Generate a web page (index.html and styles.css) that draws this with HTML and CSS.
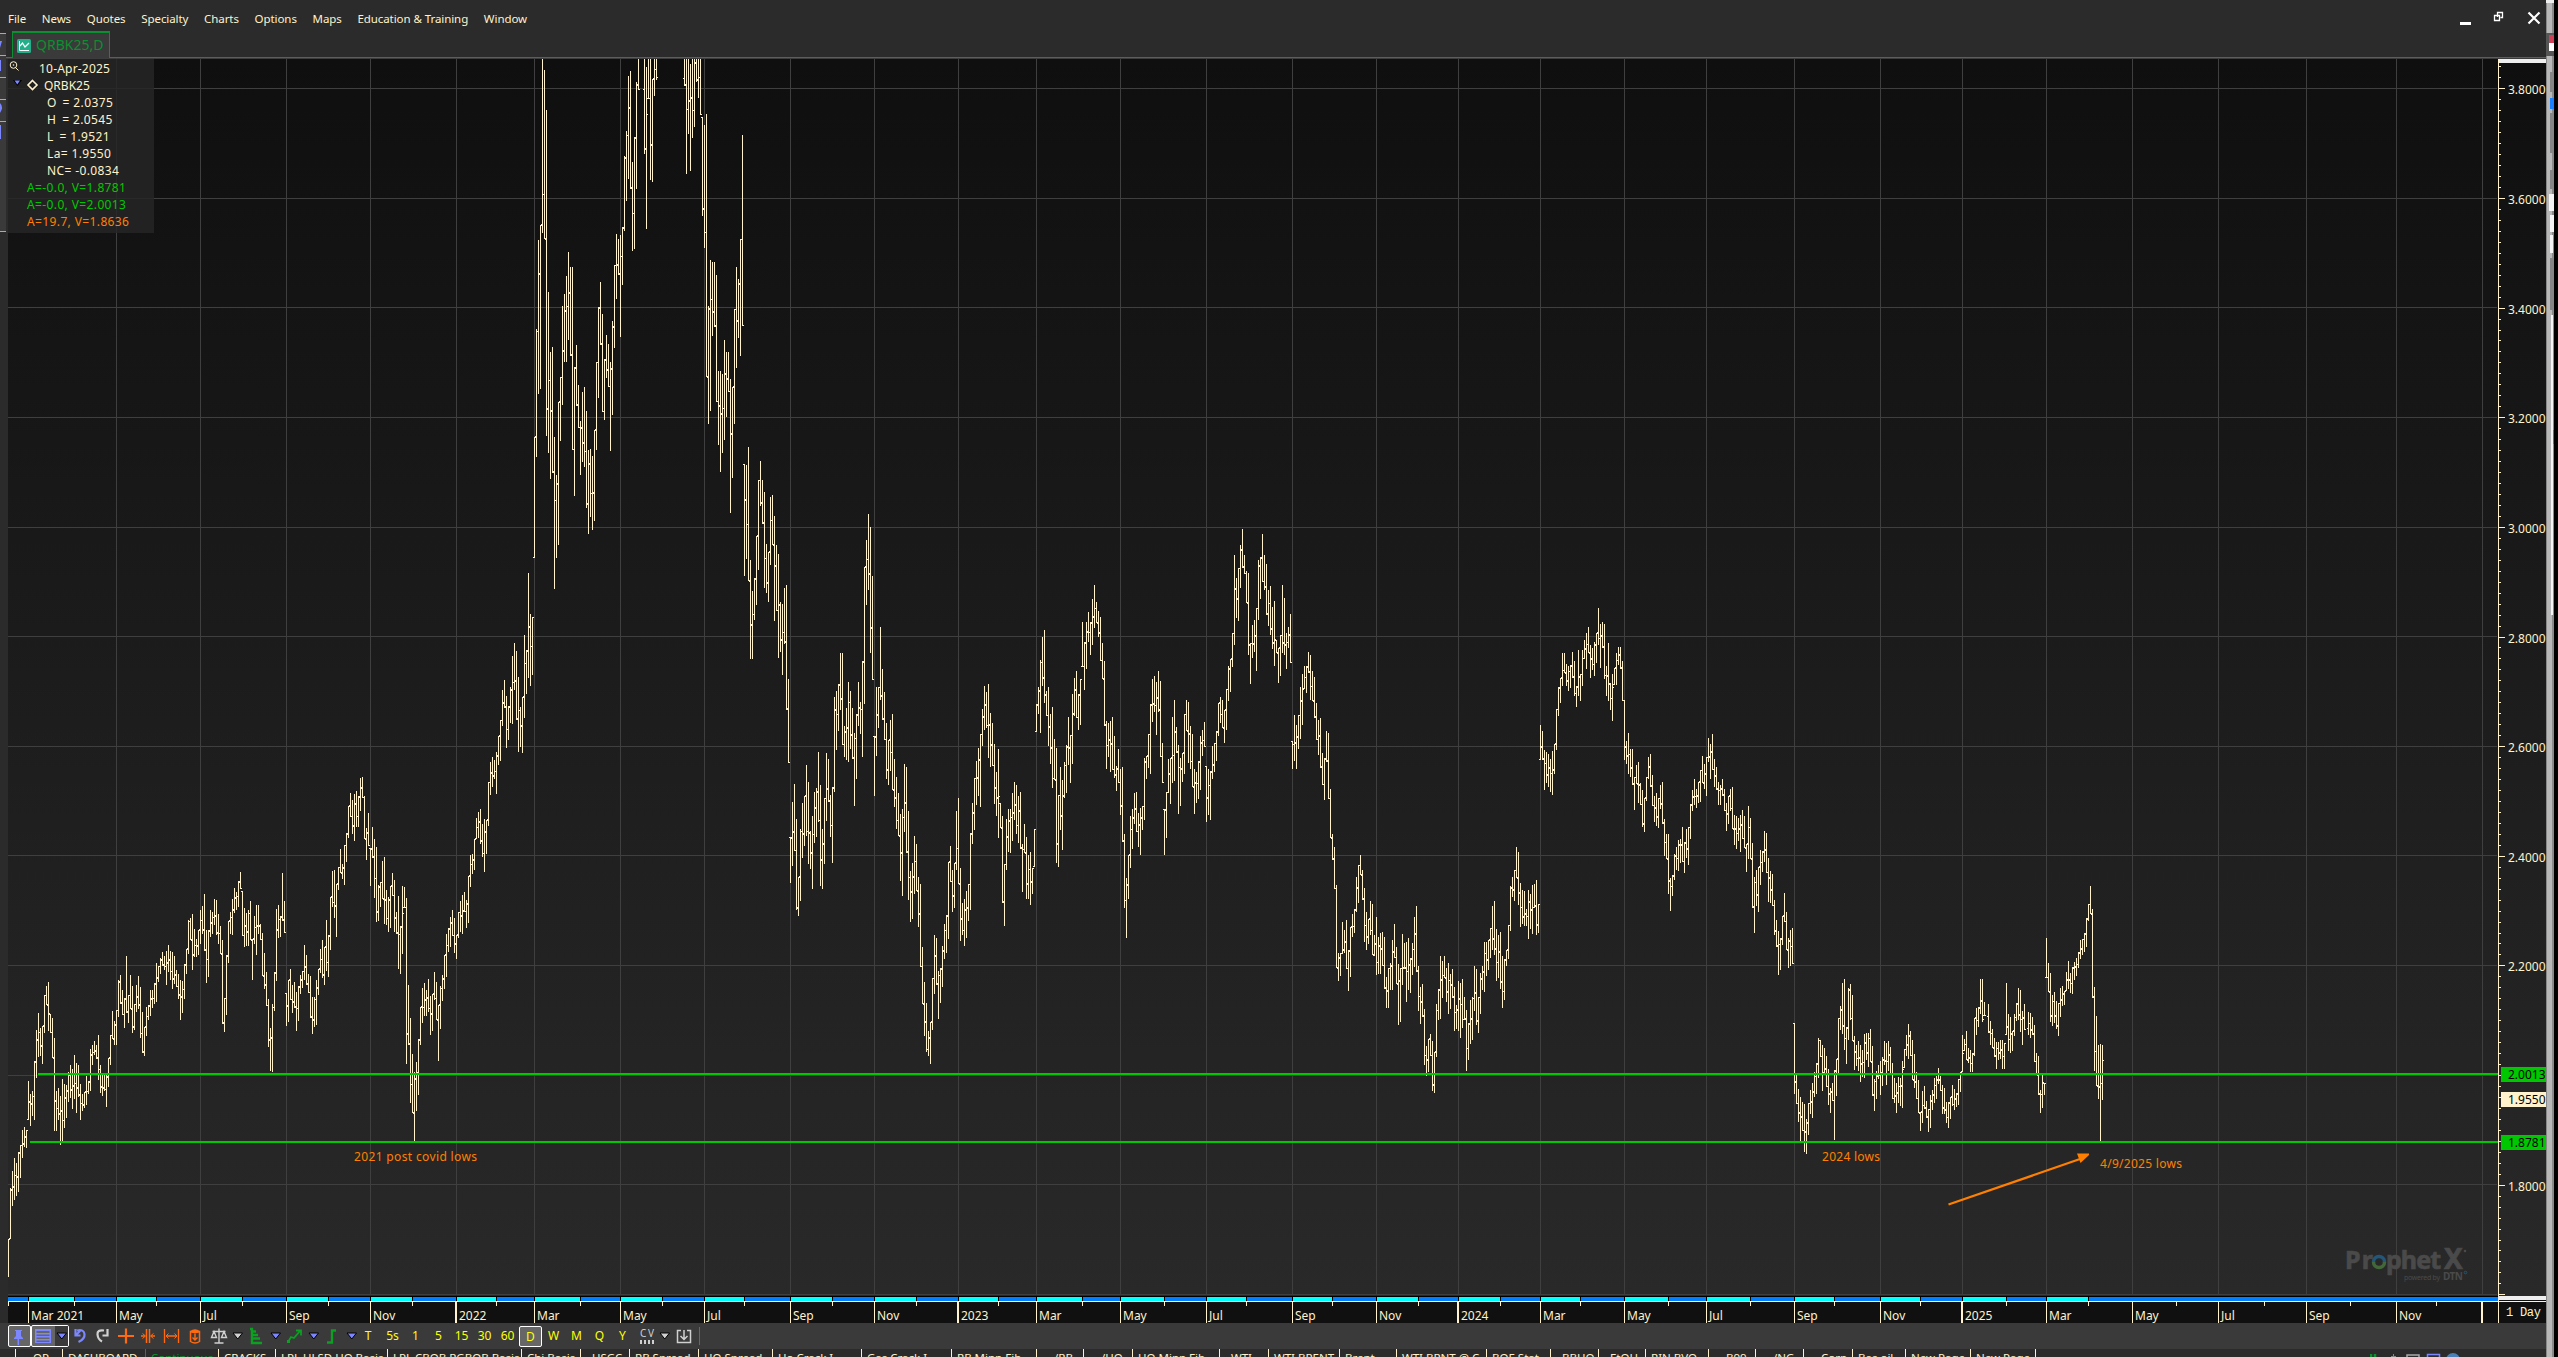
FILE: index.html
```html
<!DOCTYPE html>
<html lang="en">
<head>
<meta charset="utf-8">
<title>QRBK25,D</title>
<link rel="stylesheet" href="styles.css">
</head>
<body>
<div class="desktop">
  <main class="window">
    <header class="menubar">
      <nav class="menu">
        <span>File</span><span>News</span><span>Quotes</span><span>Specialty</span><span>Charts</span><span>Options</span><span>Maps</span><span>Education &amp; Training</span><span>Window</span>
      </nav>
      <svg class="controls" width="90" height="31" viewBox="2456 0 90 31" fill="none" stroke="#fff">
        <path d="M2460 23.5h11" stroke-width="3"/>
        <path d="M2497.500 17v-4.500h5v5h-2M2494.500 15.500h5v5h-5z" stroke-width="1.300"/>
        <path d="M2528.500 12.500l11 11M2539.500 12.500l-11 11" stroke-width="2.200"/>
      </svg>
    </header>
    <div class="doctabs">
      <div class="doctab">
        <svg width="14" height="14" viewBox="0 0 14 14"><rect width="14" height="14" rx="1.500" fill="#22b08a"/><path d="M2.500 2v9.500H12" stroke="#fff" fill="none"/><path d="M3 7l2.500-3L8 8l4-4" stroke="#fff" fill="none" stroke-width="1.300"/></svg>
        <span>QRBK25,D</span>
      </div>
    </div>
    <section class="chart">
      <svg id="plot" class="plot" width="2546" height="1264" viewBox="0 59 2546 1264">
        <defs>
          <linearGradient id="bg" x1="0" y1="0" x2="0" y2="1"><stop offset="0" stop-color="#0f0f0f"/><stop offset="1" stop-color="#292929"/></linearGradient>
          <clipPath id="area"><rect x="8" y="59" width="2490" height="1236"/></clipPath>
        </defs>
        <rect x="8" y="59" width="2538" height="1237" fill="url(#bg)"/>
        <g id="grid"></g>
        <g class="logo">
          <text x="2345" y="1269" class="logo-main" textLength="28">Pr</text>
          <text x="2386" y="1269" class="logo-main" textLength="55">phet</text>
          <text x="2444" y="1269" class="logo-x" textLength="19">X</text>
          <path d="M2373.500 1262a5.500 5.500 0 0 1 11 0" stroke="#22577a" stroke-width="3.500" fill="none"/>
          <path d="M2373.500 1262a5.500 5.500 0 0 0 11 0" stroke="#42683a" stroke-width="3.500" fill="none"/>
          <text x="2404" y="1280" class="logo-sub" textLength="36">powered by</text>
          <text x="2443" y="1280" class="logo-dtn" textLength="20">DTN</text>
          <circle cx="2465.500" cy="1272.500" r="1.300" fill="none" stroke="#22577a"/>
          <circle cx="2465" cy="1251" r="1.300"/>
        </g>
        <g id="bars" clip-path="url(#area)"></g>
        <rect x="38" y="1073" width="2460" height="2" class="level"/>
        <rect x="30" y="1141" width="2468" height="2" class="level"/>
        <path d="M1948.500 1204.500L2080 1159" stroke="#ff8000" stroke-width="2.300"/>
        <path d="M2077 1153.500h12v1.500l-8.500 8z" fill="#ff8000"/>
        <g class="note">
          <text x="354" y="1161" textLength="123">2021 post covid lows</text>
          <text x="1822" y="1161" textLength="58">2024 lows</text>
          <text x="2100" y="1168" textLength="82">4/9/2025 lows</text>
        </g>
        <g id="axes"></g>
      </svg>
      <div class="legend">
        <svg class="legend-icons" width="40" height="34" viewBox="8 59 40 34" fill="none">
          <circle cx="13.500" cy="65" r="3.300" stroke="#fff2cc"/><circle cx="13.500" cy="65" r=".8" fill="#fff2cc"/><path d="M15.500 67.500l3 3" stroke="#fff2cc"/>
          <path d="M13 80h9l-4.500 6z" fill="#000"/><path d="M14.500 80.500h5.500l-2.700 4z" fill="#7b86ff"/>
          <path d="M32.500 80.500l4.500 4.500-4.500 4.500-4.500-4.500z" stroke="#fff2cc" stroke-width="1.600"/>
        </svg>
        <p class="date">10-Apr-2025</p>
        <p class="symbol">QRBK25</p>
        <p class="value">O&thinsp; = 2.0375</p>
        <p class="value">H&thinsp; = 2.0545</p>
        <p class="value">L&thinsp; = 1.9521</p>
        <p class="value">La= 1.9550</p>
        <p class="value">NC= -0.0834</p>
        <p class="green">A=-0.0, V=1.8781</p>
        <p class="green">A=-0.0, V=2.0013</p>
        <p class="orange">A=19.7, V=1.8636</p>
      </div>
    </section>
    <div class="toolbar">
      <svg width="358" height="26" viewBox="0 1323 358 26" fill="none">
        <rect x="8.500" y="1325.500" width="22" height="21" rx="1.500" fill="#666" stroke="#fff"/>
        <rect x="31.500" y="1325.500" width="37" height="21" rx="1.500" fill="#666" stroke="#fff"/><rect x="55" y="1326" width="13" height="20" fill="#3a3a3a"/>
        <g fill="#7b86ff"><path d="M15 1330h7v1h-1v5l2 2v1h-4v6h-1.500v-6H14v-1l2-2v-5h-1z"/>
        <path d="M35 1329h16v14H35zm1.500 2v2h13v-2zm0 3.500v1.500h13v-1.500zm0 3v1.500h13v-1.500zm0 3v1.500h13v-1.500z" fill-rule="evenodd"/></g>
        <path d="M77 1330.500q7-1.500 7.500 3.500t-6 8M75.500 1329v6.500h5M76 1335l4-4" stroke="#7b86ff" stroke-width="2.200"/>
        <path d="M104 1330.500q-7-1-6.500 4t4.500 7M107.500 1329v6.500h-5" stroke="#d0d0d0" stroke-width="2.200"/>
        <g stroke="#ff6a10"><path d="M126 1328.500v15M118 1336h16" stroke-width="2.200"/>
        <path d="M146.500 1329v14M149.500 1329v14M141 1336h4M155 1336h-4" stroke-width="1.500"/><path d="M142.500 1333.500l3 2.500-3 2.500M153.500 1333.500l-3 2.500 3 2.500"/>
        <path d="M164.500 1329v14M178.500 1329v14M166 1336h11" stroke-width="1.300"/><path d="M168.500 1333.500l-2.500 2.500 2.500 2.500M174.500 1333.500l2.500 2.500-2.500 2.500"/>
        <path d="M190.500 1331.500v10q4.500 3 9 0v-10zM190.500 1331.500q4.500-3 9 0M190.500 1331.500q4.500 2 9 0" stroke-width="1.500"/><path d="M195 1333.500v6M192.500 1337.500l2.500 2.500 2.500-2.500" stroke-width="1.400"/></g>
        <path d="M219 1328.500v14M214.500 1343h9M212.500 1331.500h13M211.500 1337.500l2.500-6 2.500 6zM221.500 1337.500l2.500-6 2.500 6z" stroke="#d0d0d0" stroke-width="1.400"/>
        <path d="M250 1329h2v14h10M252 1331.500h4M252 1335h6M252 1338.500h8" stroke="#0aa020" stroke-width="2.400"/>
        <path d="M288 1342l3-5 3 1 6-7M296 1330.500h5v5" stroke="#0aa020" stroke-width="1.800"/><path d="M287 1340h3v3h-3z" fill="#0aa020"/>
        <path d="M327 1342.500h5v-12h4" stroke="#0aa020" stroke-width="2.300"/>
        <g fill="#7b86ff" stroke="#000"><path d="M57 1333h9.500l-4.750 6zM271 1333h9.500l-4.750 6zM309 1333h9.500l-4.750 6zM347 1333h9.500l-4.750 6z"/><path d="M233 1333h9.500l-4.750 6z" fill="#d0d0d0"/></g>
      </svg>
      <div class="periods"><span>T</span><span>5s</span><span>1</span><span>5</span><span>15</span><span>30</span><span>60</span><span class="on">D</span><span>W</span><span>M</span><span>Q</span><span>Y</span></div>
      <svg width="66" height="26" viewBox="636 1323 66 26" fill="none">
        <text x="640" y="1337" class="cv" textLength="14">CV</text>
        <path d="M640 1342h14" stroke="#d0d0d0" stroke-width="4" stroke-dasharray="2 2"/>
        <path d="M660 1333h9.500l-4.750 6z" fill="#d0d0d0" stroke="#000"/>
        <path d="M681 1330.500h-3.500v12h13v-12H687M684 1330v9M680.500 1336l3.500 3.500 3.500-3.500" stroke="#d0d0d0" stroke-width="1.500"/>
        <path d="M699.500 1327v18" stroke="#666"/>
      </svg>
    </div>
    <div class="pages">
      <div id="pages" class="page-list"></div>
      <svg class="status" width="176" height="8" viewBox="2370 1349 176 8" fill="none">
        <path d="M2371 1354v3M2375 1354v3" stroke="#0a9030" stroke-width="2.500"/><path d="M2393.500 1354v3M2391 1356.500h5" stroke="#888"/>
        <path d="M2407 1357v-2h12v2" stroke="#aaa" stroke-width="1.500"/><path d="M2427.500 1357v-2.500h12v2.500" stroke="#7b86ff" stroke-width="1.500"/><circle cx="2453" cy="1360" r="7" fill="#4a80b5"/>
      </svg>
    </div>
    <svg class="left-edge" width="6" height="200" viewBox="0 33 6 200">
      <path d="M0 33h6v199H0z" fill="#3a3a3a"/><path d="M0 33.500h6M0 55.500h6M0 77.500h6M0 99.500h6M0 121.500h6M0 231.500h6" stroke="#aaa"/>
      <path d="M0 41h2l-2 7zM0 60h1v11H0zM0 103q4 4 0 10zM0 125h1v14H0z" fill="#7b86ff"/>
    </svg>
  </main>
  <svg class="right-edge" width="12" height="1357" viewBox="2546 0 12 1357">
    <path d="M2546 0h12v1357h-12z" fill="#000"/><path d="M2546 0h8v1357h-8z" fill="#b8b8b8"/><path d="M2546 0h1v1357h-1z" fill="#888"/><path d="M2552 0h2v1357h-2z" fill="#8a8a8a"/>
    <path d="M2546 0h8v3h-8z" fill="#eee"/><path d="M2546 33h8v23h-8z" fill="#555"/><path d="M2549 35h5v8h-5z" fill="#d04058"/><path d="M2549 43h5v8h-5z" fill="#fff"/>
    <path d="M2550 98h4v11h-4z" fill="#1a80ff"/><path d="M2550 72h4v20h-4zM2550 113h4v40h-4zM2550 170h4v19h-4zM2550 258h4v52h-4z" fill="#858585"/><path d="M2549 194h5v17h-5zM2550 215h4v17h-4zM2550 235h3v18h-3zM2551 315h2v300h-2z" fill="#f4f4f4"/><path d="M2553 430h1v14h-1z" fill="#d04058"/>
  </svg>
</div>
<script src="chart.js"></script>
</body>
</html>
```
FILE: styles.css
```css
* { box-sizing: border-box; }
body {
  margin: 0;
  overflow: hidden;
  background: #000;
  font: 12px/17px "Noto Sans", "Open Sans", sans-serif;
  color: #fff2cc;
}
svg { display: block; flex: none; }
.desktop { display: flex; width: 2558px; height: 1357px; overflow: hidden; }
.window { position: relative; display: flex; flex-direction: column; width: 2546px; background: #2b2b2b; }
.menubar { display: flex; justify-content: space-between; height: 31px; flex: none; }
.menu { display: flex; gap: 15.7px; padding: 10px 0 0 8px; font-size: 11.5px; letter-spacing: -.07px; white-space: nowrap; }
.doctabs { height: 28px; flex: none; padding-left: 12px; border-bottom: 1px solid #3c3c3c; box-shadow: inset 0 -1px #0a9030; }
.doctab {
  display: flex; align-items: center; gap: 5px;
  width: 98px; height: 27px; padding-left: 4px;
  border: 1px solid #0a9030; border-top-width: 2px; border-bottom: 0;
  background: #3a3a3a; color: #0a9030; font-size: 14px; white-space: nowrap;
}
.doctab span { margin-top: -3px; }
.chart { position: relative; height: 1264px; flex: none; }
.legend {
  position: absolute; left: 8px; top: 0; width: 146px; height: 174px;
  padding-top: 1px; background: rgba(38, 38, 38, .85); white-space: nowrap;
}
.legend p { margin: 0; letter-spacing: .38px; }
.legend-icons { position: absolute; left: 0; top: 0; }
.legend .date { padding-left: 31px; letter-spacing: .2px; }
.legend .symbol { padding-left: 36px; letter-spacing: 0; }
.legend .value { padding-left: 39px; }
.legend .green { padding-left: 19px; color: #00c800; }
.legend .orange { padding-left: 19px; color: #ff8000; }
.level { fill: #00c800; }
.note { fill: #ff8000; }
.grid-line { fill: #3f3f3f; }
.bar { fill: #fff2cc; }
.label { fill: #fff2cc; }
.mono { font: 12px "Liberation Mono", monospace; }
.logo { fill: #4a4a4a; }
.logo-main { font: bold 25px "Noto Sans", sans-serif; stroke: #4a4a4a; stroke-width: .7px; }
.logo-x { font: bold 28px "Noto Sans", sans-serif; stroke: #4a4a4a; stroke-width: .7px; }
.logo-sub { font: 7px "Noto Sans", sans-serif; }
.logo-dtn { font: bold 10px "Noto Sans", sans-serif; }
.toolbar { display: flex; height: 26px; flex: none; background: #3a3a3a; }
.periods { display: flex; align-items: center; width: 278px; padding-top: 1px; color: #ffff00; }
.periods span { width: 23px; height: 21px; line-height: 20px; text-align: center; }
.periods .on { border: 1px solid #fff; border-radius: 2px; background: #666; }
.periods span:first-child { padding-right: 3px; }
.cv { fill: #d0d0d0; font-size: 10px; }
.pages { display: flex; justify-content: space-between; height: 8px; flex: none; overflow: hidden; }
.page-list { display: flex; height: 20px; margin-left: 15px; font-size: 11.5px; line-height: 18px; }
.page { flex: none; border-left: 1px solid #fff2cc; padding-left: 5px; overflow: hidden; white-space: nowrap; }
.page:last-child { border-right: 1px solid #fff2cc; }
.page.active { color: #0a9030; border-color: #0a9030; }
.left-edge { position: absolute; left: 0; top: 33px; }
```
FILE: chart.js
```js
// Daily bars, as "high low" pairs. Each block gives the x of its first bar
// and the origin and scale that turn its numbers into plot coordinates.
const blocks = [
  { x: 8, oy: 820, sy: 3, d: `1258 1370 1104 1256 1053 1158 1014 1140 1030 1128 998 1115 975 1074 930 1014 921 982 932 984
783 900 822 918 813 887 723 900 632 774 579 711 624 707 618 731 526 640 500 555
487 633 582 638 595 714 655 933 813 933 806 900 830 975 777 965 792 923 795 895
757 846 735 833 747 866 705 837 730 879 735 830 792 900 822 873 816 863 768 856
785 822 687 812 675 735 663 705 675 717 645 780 735 820 767 827 765 812 762 861
714 800 646 735 573 657 603 675 570 675 480 591 465 552 510 585 535 624 408 578
525 608 465 566 500 638 552 630 495 577 468 568 503 655 576 698 621 708 563 648
555 600 512 588 510 563 489 552 429 545 438 486 414 462 396 437 408 450 393 495
375 455 393 480 396 506 408 492 450 500 462 537 480 600 483 578 432 537 387 462
300 402 294 360 282 450 327 410 357 412 330 405 270 372 258 342 222 392 330 489
330 471 270 350 276 342 237 315 240 345 282 372 318 402 360 612 534 635 405 584
303 428 276 342 237 345 204 279 216 270 183 262 156 207 213 348 264 380 279 378
270 378 243 360 357 480 290 372 255 405 255 342 312 360 339 468 399 507 456 558
537 681 624 753 552 755 456 572 267 482 255 353 290 350 159 303 243 339 520 618
480 605 447 540 495 578 488 565 516 633 500 603 465 522 453 503 375 480 405 494
462 520 470 594 531 642 533 621 480 615 447 525 387 460 360 474 381 495 300 453
345 470 231 390 153 260 150 294 192 350 141 210 87 160 132 177 75 195` },
  { x: 346, oy: 600, sy: 3, d: `699 786 620 714 579 651 600 702 582 722 575 682 590 682 534 633 531 594 588 717 686 780 639 738` },
  { x: 370, oy: 820, sy: 3, d: `84 198 21 115 57 234 81 306 195 303 186 260 123 237 111 312 210 315 231 336
198 324 159 228 180 336 276 342 228 447 318 462 198 402 201 264 234 731 495 675
594 849 702 879 756 963 726 873 657 825 561 675 504 609 489 588 512 587 477 575
530 645 522 633 456 540 486 600 555 723 498 627 465 543 405 507 342 471 324 396
291 381 270 348 294 400 345 417 276 354 243 336 225 342 216 276 240 324 168 309
105 201 102 162 57 150` },
  { x: 476, oy: 600, sy: 3, d: `654 718 636 715 627 732 672 772 657 816 660 761 546 678 486 585 471 561 480 537 456 582 408 495
360 483 270 378 240 324 288 444 318 420 261 369 168 372 129 270 153 360 231 456 321 441 291 459
105 354 150 282 -81 234 42 258 51 225` },
  { x: 534, oy: 50, sy: 2.8, d: `1086 1422 781 1140 532 963 490 949 22 512 56 529 168 1081 680 1128 846 1201 834 1184
1086 1509 1190 1422 986 1386 918 1095 717 994 683 874 633 874 568 812 608 857 608 1120
890 1249 826 997 938 1058 1039 1190 960 1154 944 1168 1011 1282 1122 1355 1117 1308 1137 1344
1064 1319 874 1120 722 974 650 826 739 1014 865 1036 798 918 823 944 876 1123 759 1022
602 834 515 697 529 630 518 804 498 658 297 507 227 423 73 361 59 389 316 563
246 557 90 389 22 112 - - - - 22 291 50 501 22 137 22 364 81 370 22 129 22 84
- - - - - - - - - - - - - - - - - - - - - - - - - -
22 101 22 347 22 235 39 339 22 246 22 216 22 90 22 134 22 182 190 465
210 554 179 916 717 1047 588 1011 594 801 596 776 630 986 899 1106 899 1182 907 1128
812 1092 848 1028 846 958 921 1296 946 1198 725 1047 610 890 641 806 529 857 238 773
1159 1473 1162 1425 1114 1487` },
  { x: 750, oy: 500, sy: 2.6133, d: `159 416 240 416 204 314 94 274 -52 183 -102 15 -52 63 -21 230 117 243 136 267
-8 170 -11 118 44 316 118 290 141 413 267 396 272 457 230 376 222 549 468 687
883 1001 789 956 742 917 834 1071 985 1087 860 1048 792 936 774 904 693 878 737 951
865 964 826 1017 763 896 753 881 659 841 745 1009 860 1017 779 951 661 839 677 789
771 881 750 948 515 763 499 653 481 604 402 549 400 640 591 672 544 679 476 685
499 651 544 677 609 800 559 729 476 591 528 612 421 672 175 533 105 274 37 235
71 400 199 470 619 774 489 669 491 596 332 523 442 575 502 627 583 729 627 745
575 708 559 758 679 802 724 860 766 878 821 996 808 1035 690 867 700 923 815 1045
970 1103 949 1095 878 1029 899 1022 985 1116 1004 1220 1168 1317 1260 1401 1315 1443 1388 1453
1364 1474 1249 1385 1139 1291 1145 1268 1231 1356 1223 1315 1166 1273 1108 1200 1085 1184 946 1147
904 998 967 1077 949 1066 813 967 779 1004 964 1152 1053 1137 1045 1166 1022 1145 1004 1100
870 1071 794 899 727 862 682 797 648 774 612 802 546 643 486 601 502 596 481 674
557 698 583 695 638 794 711 826 651 883 794 857 826 1053 951 1113 834 967 808 920
808 923 766 891 737 836 747 873 774 896 763 912 899 1024 849 923 883 1043 928 1043
920 1058 962 1030 860 959 533 606 489 559 418 609 358 486 340 531 499 564 489 643
559 690 541 753 625 732 648 949 771 959 700 862 732 915 685 779 640 766 567 693
614 740 507 690 465 564 447 570 507 601 470 588 321 436 371 497 321 442 295 371
319 405 259 379 222 335 267 321 290 358 306 421 374 468 423 591 578 703 585 672
578 711 567 706 617 727 695 760 651 740 703 823 700 894 875 1066 988 1145 928 1043
828 962 808 912 768 847 763 868 818 907 805 928 802 862 674 836 669 729 612 700
533 716 468 580 460 554 476 614 449 554 473 672 635 740 808 928 763 883 679 766
674 794 567 740 525 735 593 661 640 821 674 800 661 737 559 716 523 604 528 687
591 703 612 750 703 821 711 792 682 781 617 758 601 669 580 646` },
  { x: 1206, oy: 500, sy: 2.6133, d: `695 841 703 823 708 836 643 729 635 711 604 682 531 617 515 583 525 596 551 635
494 601 434 525 416 502 348 436 144 379 204 308 180 316 118 230 78 178 144 193
186 269 193 405 374 481 327 413 314 397 282 447 157 314 149 259 89 214 144 235
167 301 235 329 225 353 280 389 264 434 366 400 387 478 355 460 222 400 256 405
348 442 332 387 298 426 630 703 564 682 588 703 562 651 491 625 457 588 436 494
436 504 397 452 405 523 449 525 463 570 531 627 575 666 572 700 661 745 674 784
604 685 609 781 755 883 875 941 909 1017 1006 1223 1184 1257 1184 1244 1103 1186 1124 1184
1098 1226 1176 1283 1116 1247 1082 1142 1069 1132 985 1077 956 1053 930 980 967 1045 1014 1155
1079 1176 1095 1160 1048 1137 1056 1189 1139 1192 1092 1241 1142 1239 1132 1239 1129 1218 1142 1278
1247 1328 1223 1328 1210 1281 1152 1281 1108 1197 1168 1265 1213 1372 1223 1364 1134 1267 1160 1226
1155 1312 1145 1281 1197 1288 1158 1241 1090 1220 1061 1233 1218 1335 1273 1369 1265 1351 1330 1477
1427 1505 1409 1495 1396 1453 1414 1544 1443 1550 1317 1456 1278 1359 1192 1356 1205 1301 1194 1249
1223 1312 1210 1343 1239 1330 1226 1301 1273 1388 1322 1382 1257 1388 1262 1406 1254 1380 1299 1359
1335 1492 1367 1464 1307 1422 1301 1411 1218 1335 1226 1372 1299 1393 1236 1343 1220 1281 1155 1286
1155 1244 1150 1228 1119 1197 1061 1176 1048 1189 1121 1257 1137 1249 1129 1278 1194 1328 1200 1307
1176 1218 1111 1200 1009 1126 985 1037 967 1048 909 988 920 1058 1001 1116 1019 1108 1024 1113
1071 1113 1019 1147 1030 1121 1006 1134 1004 1066 993 1137 1058 1132 588 680 606 680 654 758
659 740 666 750 677 763 656 771 638 716 546 653 491 564 465 531 402 486 402 452
429 486 436 499 431 491 397 465 423 512 486 541 392 512 457 525 392 486 368 416
348 442 332 400 379 465 389 444 371 460 348 426 282 379 324 439 321 387 324 468
434 512 376 525 478 549 455 578 439 483 402 483 384 431 384 442 421 525 523 679
632 690 609 716 653 724 651 745 724 810 693 742 687 792 740 797 758 855 779 868
724 787 672 729 666 750 721 800 774 841 766 852 781 857 747 808 737 847 834 930
875 938 873 1030 990 1074 980 1035 925 993 907 967 889 970 886 949 855 946 896 975
862 936 855 954 795 886 760 813 729 797 755 805 737 792 706 789 669 740 690 755
672 774 622 685 638 729 612 706 679 750 700 758 737 797 745 797` },
  { x: 1722, oy: 700, sy: 3, d: `237 288 267 333 309 393 288 372 267 333 261 387 345 435 348 447 354 423 345 456
330 417 348 444 432 516 318 477 354 477 429 624 531 699 510 618 501 636 450 555
453 516 393 486 399 519 474 606 513 609 522 618 600 705 660 741 693 825 714 810
648 735 579 666 636 750 714 804 690 798 684 792 969 1182 1125 1212 1167 1266 1191 1323
1206 1293 1212 1356 1257 1362 1209 1305 1170 1242 1149 1254 1116 1191 1089 1182 1014 1134 1020 1071
1035 1173 1044 1125 1068 1161 1107 1215 1164 1239 1149 1203 1110 1320 1077 1188 954 1125 918 990
849 1002 837 1050 981 1092 864 1020 852 960 885 1023 1008 1110 1035 1098 1023 1113 1035 1146
1050 1131 1002 1134 999 1080 999 1101 987 1086 1038 1188 1137 1233 1113 1197 1095 1137 1083 1185
1071 1158 1023 1095 1029 1155 1023 1113 1041 1125 1089 1197 1134 1209 1149 1239 1131 1209 1134 1218
1083 1224 1047 1104 1005 1068 972 1077 993 1068 1020 1140 1062 1164 1116 1197 1140 1239 1236 1293
1173 1269 1158 1227 1203 1254 1227 1296 1185 1284 1170 1230 1134 1209 1128 1197 1104 1152 1128 1173
1155 1242 1164 1242 1206 1269 1206 1284 1191 1257 1155 1218 1167 1230 1179 1221 1137 1215 1116 1176
1005 1116 1017 1053 993 1080 1044 1089 1050 1117 1059 1117 954 1068 924 1005 921 981 837 942
837 966 906 948 - - 912 999 963 1035 987 1044 1014 1071 1026 1107 1026 1080 1020 1077
1020 1107 1029 1107 849 1005 942 1053 951 1059 993 1053 942 1008 909 963 864 960 870 996
933 1035 912 990 - - 936 1005 939 1014 951 1005 975 1086 1059 1125 1068 1185 1170 1239
1125 1224 1149 1185 714 834 789 876 819 966 885 978 876 969 903 987 909 1008 864 951
858 918 873 915 816 873 783 867 819 879 801 882 786 840 774 828 756 804 720 777
717 765 699 756 654 741 612 663 558 642 627 894 861 1113 948 1158 1035 1197 1032 1323 1035 1201` }
];

const NS = 'http://www.w3.org/2000/svg';
const byId = id => document.getElementById(id);
function add(parent, tag, attrs, text) {
  const el = document.createElementNS(NS, tag);
  for (const k in attrs) el.setAttribute(k, attrs[k]);
  if (text) el.textContent = text;
  parent.appendChild(el);
}
const rect = (p, x, y, width, height, cls) => add(p, 'rect', { x, y, width, height, class: cls });

// Grid
const rows = [88, 198, 307, 417, 527, 636, 746, 855, 965, 1075, 1184, 1294];
const months = [
  [28, 'Mar 2021', 74], [116, 'May', 156], [200, 'Jul', 242], [286, 'Sep', 328], [370, 'Nov', 412], [456, '2022', 496],
  [534, 'Mar', 580], [620, 'May', 662], [704, 'Jul', 744], [790, 'Sep', 832], [874, 'Nov', 916], [958, '2023', 998],
  [1036, 'Mar', 1082], [1120, 'May', 1164], [1206, 'Jul', 1246], [1292, 'Sep', 1332], [1376, 'Nov', 1418], [1458, '2024', 1500],
  [1540, 'Mar', 1580], [1624, 'May', 1668], [1706, 'Jul', 1750], [1794, 'Sep', 1834], [1880, 'Nov', 1920], [1962, '2025', 2006],
  [2046, 'Mar', 2088], [2132, 'May', 2176], [2218, 'Jul', 2264], [2306, 'Sep', 2350], [2396, 'Nov', 2436], [2482, '', 0]
];
const grid = byId('grid');
rows.forEach(y => rect(grid, 8, y, 2489, 1, 'grid-line'));
months.slice(1).forEach(m => rect(grid, m[0], 59, 1, 1236, 'grid-line'));

// Bars with open and close ticks
const bars = [];
for (const b of blocks) {
  const v = b.d.trim().split(/\s+/);
  for (let i = 0; i < v.length; i += 2) {
    if (v[i] !== '-') bars.push({ x: b.x + i, hi: Math.round(b.oy + v[i] / b.sy - .4), lo: Math.round(b.oy + v[i + 1] / b.sy) });
  }
}
let path = '', prev = null;
bars.forEach((b, i) => {
  const n = bars[i + 1] || b;
  const clamp = y => Math.round(Math.max(b.hi, Math.min(b.lo - 1, y)));
  const close = clamp((n.hi + n.lo) / 2 + ((i * 7) % 5 - 2) * (b.lo - b.hi) / 9);
  const open = clamp(prev === null ? close : prev + (i % 3) - 1);
  path += `M${b.x} ${b.hi}h1V${b.lo}h-1zM${b.x + 1} ${close}h1v1h-1zM${b.x - 1} ${open}h1v1h-1z`;
  prev = close;
});
add(byId('bars'), 'path', { d: path, class: 'bar' });

// Price axis
const axes = byId('axes');
rect(axes, 2498, 59, 48, 4, '');
axes.lastChild.setAttribute('fill', '#eee');
rect(axes, 2498, 59, 1, 1264, 'label');
for (let i = -2; i <= 110; i++) {
  const y = Math.round(88.3 + i * 10.964);
  const major = i % 10 === 0;
  rect(axes, 2499, y, major ? 6 : 2, 1, 'label');
  if (major && i < 110 && i !== 90) add(axes, 'text', { x: 2508, y: y + 6, class: 'label' }, (3.8 - i / 50).toFixed(4));
}
[[1074, '2.0013', '#00c800'], [1099, '1.9550', '#fff2cc'], [1142, '1.8781', '#00c800']].forEach(([y, t, fill]) => {
  add(axes, 'rect', { x: 2501, y: y - 7, width: 45, height: 15, fill });
  add(axes, 'text', { x: 2508, y: y + 5, fill: '#000' }, t);
});

// Time axis
const box = (x, y, width, height, fill) => add(axes, 'rect', { x, y, width, height, fill });
box(8, 1296, 2490, 27, '#101010');
box(8, 1296, 2490, 1, '#000');
box(8, 1297, 2490, 4, '#0080ff');
box(2499, 1296, 47, 27, '#101010');
box(2498, 1296, 48, 4, '#eee');
months.forEach(([x, name, mid]) => {
  if (x < 2100) {
    box(x, 1297, mid - x, 4, '#00ffff');
    box(x, 1297, 1, 4, '#000');
    box(mid, 1297, 1, 4, '#000');
  }
  const year = /^20/.test(name) || !name;
  box(year ? x - 1 : x, 1302, year ? 2 : 1, 21, '#fff2cc');
  if (mid) box(mid, 1302, 1, 4, '#fff2cc');
  add(axes, 'text', { x: x + 3, y: 1320, class: 'label' }, name);
});
box(8, 1302, 1, 4, '#fff2cc');
box(8, 1301, 2538, 1, '#fff2cc');
add(axes, 'text', { x: 2506, y: 1316, class: 'label mono', textLength: 35 }, '1 Day');

// Page tabs: left edge and caption
const pages = [[15, '  OP'], [62, 'DASHBOARD'], [145, 'Continuous'], [218, 'CRACKS'], [275, 'LPL ULSD HO Basis'], [387, 'LPL CBOB RGBOB Basis'],
  [521, 'Chi Basis'], [580, ' USGC'], [629, 'RB Spread'], [698, 'HO Spread'], [772, 'Ho Crack I'], [861, 'Gas Crack I'], [951, 'RB Minn Fib'],
  [1036, '  /RB'], [1083, '  /HO'], [1132, 'HO Minn Fib'], [1219, ' WTI'], [1268, 'WTI BRENT'], [1339, 'Brent'], [1396, 'WTI BRNT @ C'],
  [1486, 'BOE Stat'], [1550, ' BBHO'], [1598, ' EtOH'], [1645, 'RIN BVO'], [1708, '  B99'], [1755, '  /NG'], [1803, '  Corn'],
  [1852, 'Bas oil'], [1905, 'New Page'], [1970, 'New Page'], [2036]];
pages.slice(0, -1).forEach(([x, name], i) => {
  const el = document.createElement('div');
  el.className = 'page' + (i === 2 ? ' active' : '');
  el.style.width = pages[i + 1][0] - x + 'px';
  el.textContent = name.replace(/^ +/, s => '\u00a0'.repeat(s.length * 2));
  byId('pages').appendChild(el);
});
```
